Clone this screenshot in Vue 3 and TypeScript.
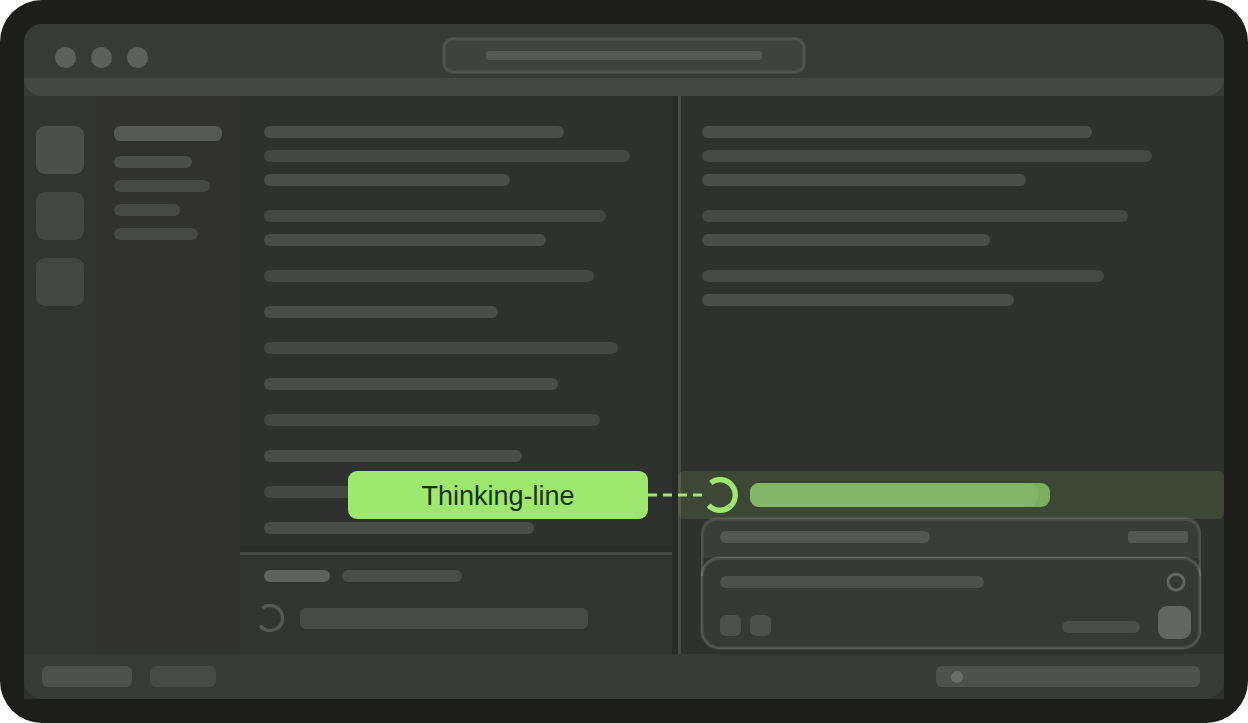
<script setup lang="ts">
type Tone = 'warm' | 'cool' | 'dim' | 'mute'
interface Line {
  width: number
  tone: Tone
}

const line = (width: number, tone: Tone): Line => ({ width, tone })

const files: Line[] = [line(78, 'cool'), line(96, 'dim'), line(66, 'dim'), line(84, 'dim')]

const leftText: Line[][] = [
  [line(300, 'warm'), line(366, 'mute'), line(246, 'warm')],
  [line(342, 'mute'), line(282, 'warm')],
  [line(330, 'mute')],
  [line(234, 'warm')],
  [line(354, 'mute')],
  [line(294, 'warm')],
  [line(336, 'mute')],
  [line(258, 'warm')],
  [line(318, 'mute')],
  [line(270, 'warm')],
]

const rightText: Line[][] = [
  [line(390, 'cool'), line(450, 'dim'), line(324, 'cool')],
  [line(426, 'dim'), line(288, 'cool')],
  [line(402, 'dim'), line(312, 'cool')],
]

const px = (width: number) => ({ width: `${width}px` })
</script>

<template>
  <div class="device">
    <div class="window">
      <header class="header">
        <div class="titlebar">
          <div class="lights">
            <button v-for="n in ['Close', 'Minimize', 'Zoom']" :key="n" type="button" class="light" :aria-label="n"></button>
          </div>
          <button type="button" class="search outlined" aria-label="Search"><span class="search-text"></span></button>
        </div>
        <div class="tabstrip"></div>
      </header>

      <main class="body">
        <nav class="activity">
          <button type="button" class="tile active" aria-label="Files"></button>
          <button type="button" class="tile" aria-label="Find"></button>
          <button type="button" class="tile" aria-label="Source control"></button>
        </nav>

        <aside class="explorer">
          <div class="heading"></div>
          <div v-for="(f, i) in files" :key="i" class="line" :class="f.tone" :style="px(f.width)"></div>
        </aside>

        <section class="left">
          <div class="editor">
            <div v-for="(group, g) in leftText" :key="g" class="group">
              <div v-for="(l, i) in group" :key="i" class="line" :class="l.tone" :style="px(l.width)"></div>
            </div>
          </div>
          <div class="terminal">
            <div class="tabs">
              <div class="line tab-on"></div>
              <div class="line cool tab-off"></div>
            </div>
            <div class="task">
              <svg class="spinner" viewBox="-18 -18 36 36" aria-hidden="true">
                <path d="M-7.7 -9.8A12.5 12.5 0 1 1 -10 7.5" fill="none" stroke="#565955" stroke-width="3.4" />
              </svg>
              <div class="task-bar"></div>
            </div>
          </div>
        </section>

        <section class="right">
          <div class="chat">
            <div v-for="(group, g) in rightText" :key="g" class="group">
              <div v-for="(l, i) in group" :key="i" class="line" :class="l.tone" :style="px(l.width)"></div>
            </div>
          </div>

          <div class="thinking">
            <svg class="ring" viewBox="-18 -18 36 36" aria-hidden="true">
              <path d="M-9.3 -12.2A15.3 15.3 0 1 1 -11.4 10.2" fill="none" stroke="#9fe870" stroke-width="5.4" />
            </svg>
            <div class="progress"><div class="progress-done"></div></div>
            <div class="callout">Thinking-line</div>
            <svg class="leader" viewBox="0 0 54 6" aria-hidden="true">
              <path d="M0 3H54" stroke="#9fe870" stroke-width="3" stroke-dasharray="9 6" />
            </svg>
          </div>

          <div class="tray outlined">
            <div class="line tray-text"></div>
            <button type="button" class="tray-action" aria-label="Review"></button>
          </div>

          <div class="composer outlined">
            <div class="row top">
              <div class="line prompt"></div>
              <svg class="context" viewBox="0 0 20 20" aria-hidden="true">
                <circle cx="10" cy="10" r="8" fill="none" stroke="#626561" stroke-width="3" />
              </svg>
            </div>
            <div class="row bottom">
              <div class="tools">
                <button type="button" class="tool" aria-label="Attach"></button>
                <button type="button" class="tool" aria-label="Commands"></button>
              </div>
              <div class="sending">
                <div class="line cool model"></div>
                <button type="button" class="send" aria-label="Send"></button>
              </div>
            </div>
          </div>
        </section>
      </main>

      <footer class="status">
        <div class="status-left">
          <div class="chip branch"></div>
          <div class="chip checks"></div>
        </div>
        <div class="chip info"><span class="dot"></span></div>
      </footer>
    </div>
  </div>
</template>

<style>
body {
  margin: 0;
  background: #fff;
}
</style>

<style scoped>
* {
  box-sizing: border-box;
}
button {
  display: block;
  padding: 0;
  border: 0;
  flex: none;
}
.device {
  min-height: 100vh;
  display: flex;
  padding: 24px;
  border-radius: 42px;
  background: #1d1e1b;
  font-family: "Liberation Sans", Arial, sans-serif;
}
.window {
  flex: 1;
  min-width: 0;
  display: flex;
  flex-direction: column;
  border-radius: 18px 18px 0 0;
  background: #2f312e;
}
.header {
  border-radius: 18px 18px 0 0;
  background: #373b37;
}
.titlebar {
  height: 54px;
  display: grid;
  grid-template-columns: 1fr 362px 1fr;
  align-items: center;
}
.lights {
  display: flex;
  gap: 15px;
  padding: 12px 0 0 31px;
}
.light {
  width: 21px;
  height: 21px;
  border-radius: 50%;
  background: #5d615d;
}
.outlined {
  border: 2px solid rgba(255, 255, 255, 0.14);
  box-shadow: 0 0 0 1px rgba(255, 255, 255, 0.08), inset 0 0 0 1px rgba(255, 255, 255, 0.08);
  background-clip: padding-box;
}
.search {
  height: 35px;
  margin-top: 9px;
  padding: 0 41px;
  border-color: #505550;
  border-radius: 10px;
  background-color: #3f433f;
  box-shadow: 0 0 0 1px #434843, inset 0 0 0 1px #474c47;
}
.search-text {
  display: block;
  height: 9px;
  border-radius: 3px;
  background: #565a54;
}
.tabstrip {
  height: 18px;
  border-radius: 0 0 18px 18px;
  background: #444844;
}
.body {
  flex: 1;
  display: grid;
  grid-template-columns: 72px 144px minmax(0, 441fr) minmax(0, 543fr);
}
.activity {
  display: flex;
  flex-direction: column;
  align-items: center;
  gap: 18px;
  padding-top: 30px;
  background: #313532;
}
.tile {
  width: 48px;
  height: 48px;
  border-radius: 9px;
  background: #434743;
}
.tile.active {
  background: #4c504c;
}
.explorer {
  display: flex;
  flex-direction: column;
  gap: 12px;
  padding: 30px 18px;
  background: #313230;
}
.heading {
  height: 15px;
  margin-bottom: 3px;
  border-radius: 6px;
  background: #555754;
}
.line {
  height: 12px;
  max-width: 100%;
  border-radius: 6px;
}
.warm {
  background: #4b4d4a;
}
.cool {
  background: #4a4e4a;
}
.dim {
  background: #464845;
}
.mute {
  background: #434643;
}
.left {
  display: flex;
  flex-direction: column;
  border-right: 3px solid #484a47;
}
.editor {
  flex: 1;
  display: flex;
  flex-direction: column;
  gap: 24px;
  padding: 30px 24px 12px;
  border-right: 6px solid #282a28;
  background: #2f312e;
}
.group {
  display: flex;
  flex-direction: column;
  gap: 12px;
}
.terminal {
  height: 108px;
  border-top: 6px solid #282a28;
  border-right: 6px solid #282a28;
  background: #323431;
}
.tabs {
  display: flex;
  gap: 12px;
  padding: 15px 24px 0;
  border-top: 3px solid #484a47;
}
.tab-on {
  width: 66px;
  background: #5e625e;
}
.tab-off {
  width: 120px;
}
.task {
  display: flex;
  align-items: center;
  gap: 12px;
  padding: 18px 12px 0;
}
.spinner {
  width: 36px;
  height: 36px;
}
.task-bar {
  width: 288px;
  height: 21px;
  border-radius: 6px;
  background: #484a47;
}
.right {
  display: flex;
  flex-direction: column;
  background: #2f312e;
}
.chat {
  flex: 1;
  display: flex;
  flex-direction: column;
  gap: 24px;
  padding: 30px 21px;
}
.thinking {
  position: relative;
  height: 48px;
  display: flex;
  align-items: center;
  gap: 12px;
  margin-left: -3px;
  padding-left: 24px;
  border-radius: 6px;
  background: rgba(159, 232, 112, 0.125);
}
.ring {
  width: 36px;
  height: 36px;
}
.progress {
  width: 300px;
  border-radius: 9px;
  background: #7cae5e;
}
.progress-done {
  width: 96%;
  height: 24px;
  border-radius: 9px;
  background: #83b765;
}
.callout {
  position: absolute;
  top: 0;
  right: calc(100% + 30px);
  width: 300px;
  height: 48px;
  border-radius: 9px;
  background: #9fe870;
  color: #163300;
  font-size: 27px;
  line-height: 50px;
  text-align: center;
}
.leader {
  position: absolute;
  top: 21px;
  left: -30px;
  width: 54px;
  height: 6px;
}
.tray {
  height: 58px;
  display: flex;
  align-items: flex-start;
  justify-content: space-between;
  margin: -1px 23px 0 20px;
  padding: 11px 11px 0 17px;
  border-bottom: 0;
  border-radius: 15px 15px 0 0;
  background-image: linear-gradient(#3a3c39 38px, transparent 38px);
  box-shadow: 0 -1px 0 rgba(255, 255, 255, 0.06), inset 0 1px 0 rgba(255, 255, 255, 0.08), inset 1px 0 0 rgba(255, 255, 255, 0.08), inset -1px 0 0 rgba(255, 255, 255, 0.08);
}
.tray-text {
  width: 210px;
  background: #555754;
}
.tray-action {
  width: 60px;
  height: 12px;
  border-radius: 3px;
  background: #555754;
}
.composer {
  position: relative;
  height: 92px;
  display: flex;
  flex-direction: column;
  justify-content: space-between;
  margin: -19px 23px 5px 20px;
  padding: 13px 8px 8px 17px;
  border-radius: 19px;
  background-color: #363835;
}
.row {
  display: flex;
  justify-content: space-between;
  align-items: center;
}
.top {
  padding-right: 5px;
}
.prompt {
  width: 264px;
  background: #4e504d;
}
.context {
  width: 20px;
  height: 20px;
}
.tools {
  display: flex;
  gap: 9px;
  padding-top: 6px;
}
.tool {
  width: 21px;
  height: 21px;
  border-radius: 6px;
  background: #4e504d;
}
.sending {
  display: flex;
  align-items: center;
  gap: 18px;
}
.model {
  width: 78px;
  margin-top: 9px;
}
.send {
  width: 33px;
  height: 33px;
  border-radius: 9px;
  background: #636562;
}
.status {
  height: 45px;
  display: flex;
  justify-content: space-between;
  align-items: center;
  padding: 0 24px 0 18px;
  border-radius: 0 0 18px 18px;
  background: #373b37;
}
.status-left {
  display: flex;
  gap: 18px;
}
.chip {
  height: 21px;
  border-radius: 6px;
  background: #4e524e;
}
.branch {
  width: 90px;
}
.checks {
  width: 66px;
  background: #474b47;
}
.info {
  width: 264px;
  display: flex;
  align-items: center;
  padding-left: 15px;
}
.dot {
  width: 12px;
  height: 12px;
  border-radius: 50%;
  background: #6a6e6a;
}
</style>
